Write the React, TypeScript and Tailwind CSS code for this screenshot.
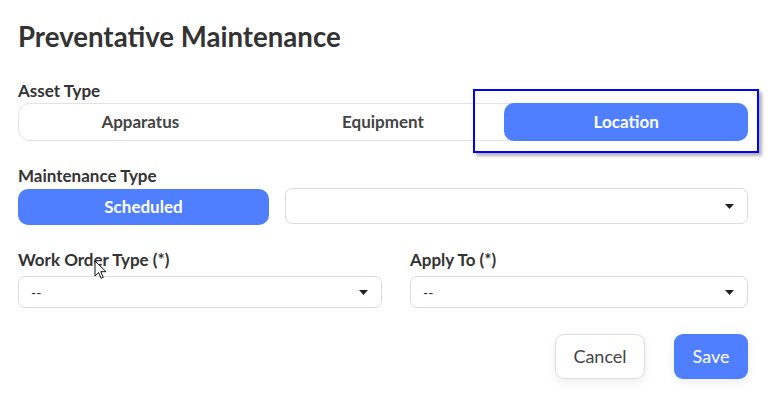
// Preventative maintenance form: asset type segmented control, maintenance type, selects and actions

const font = { fontFamily: 'Lato, "Noto Sans", sans-serif' }

function Caret() {
  return (
    <svg width="9" height="5" viewBox="0 0 9 5" className="shrink-0">
      <path d="M0 0h9L4.5 5z" fill="#222" />
    </svg>
  )
}

function Select({ value, className }: { value?: string; className: string }) {
  return (
    <div
      className={`flex items-center justify-between rounded-[7px] border border-[#dcdcdc] bg-white pl-3 pr-[13px] ${className}`}
    >
      <span className="text-[14px] text-[#333]">{value}</span>
      <Caret />
    </div>
  )
}

function Label({ children, className = '' }: { children: React.ReactNode; className?: string }) {
  return <div className={`text-[17px] leading-5 font-bold text-[#333] ${className}`}>{children}</div>
}

function Cursor() {
  return (
    <svg
      width="13"
      height="20"
      viewBox="0 0 13 20"
      className="absolute left-[94px] top-[260px] pointer-events-none"
    >
      <path
        d="M1 1v15l3.5-3.5 2.6 5.8 2.2-1-2.6-5.6H12z"
        fill="#fff"
        stroke="#111"
        strokeWidth="1"
        strokeLinejoin="round"
      />
    </svg>
  )
}

export default function App() {
  const assetTypes = ['Apparatus', 'Equipment', 'Location']
  const selected = 'Location'

  return (
    <div className="relative w-[768px] h-[405px] bg-white overflow-hidden" style={font}>
      <div className="flex flex-col pl-[18px] pr-[20px] pt-[20px]">
        <h1 className="text-[27.6px] leading-[34px] font-bold text-[#333]">Preventative Maintenance</h1>

        {/* Asset type */}
        <Label className="mt-[27px]">Asset Type</Label>
        <div className="mt-[2px] grid grid-cols-3 h-[38px] rounded-[12px] border border-[#e2e2e2]">
          {assetTypes.map((t) =>
            t === selected ? (
              <div
                key={t}
                className="-my-px -mr-px flex items-center justify-center rounded-[10px] bg-[#4f7fff] text-[17px] font-bold text-white"
              >
                {t}
              </div>
            ) : (
              <div key={t} className="flex items-center justify-center text-[17px] font-bold text-[#444]">
                {t}
              </div>
            )
          )}
        </div>

        {/* Maintenance type */}
        <Label className="mt-[25px]">Maintenance Type</Label>
        <div className="mt-[2px] flex gap-[16px]">
          <div className="mt-px flex h-[36px] w-[251px] items-center justify-center rounded-[10px] bg-[#4f7fff] text-[17px] font-bold text-white">
            Scheduled
          </div>
          <Select className="h-[36px] flex-1" />
        </div>

        {/* Work order / apply to */}
        <div className="mt-[25px] grid grid-cols-[364px_1fr] gap-[28px]">
          <div className="flex flex-col">
            <Label>Work Order Type (*)</Label>
            <Select value="--" className="mt-[6px] h-[32px]" />
          </div>
          <div className="flex flex-col">
            <Label>Apply To (*)</Label>
            <Select value="--" className="mt-[6px] h-[32px]" />
          </div>
        </div>

        {/* Actions */}
        <div className="mt-[26px] flex justify-end gap-[29px]">
          <button className="h-[45px] w-[90px] rounded-[9px] border border-[#dedede] bg-white text-[18px] text-[#444] shadow-[0_3px_8px_rgba(0,0,0,0.08)]">
            Cancel
          </button>
          <button className="h-[45px] w-[74px] rounded-[9px] bg-[#4f7fff] text-[18px] text-white shadow-[0_3px_8px_rgba(0,0,0,0.08)]">
            Save
          </button>
        </div>
      </div>

      {/* focus highlight drawn over the selected segment */}
      <div className="absolute left-[473px] top-[89px] h-[64px] w-[286px] border-2 border-[#0000ff] shadow-[3px_3px_3px_rgba(0,0,0,0.3)] pointer-events-none" />
      <Cursor />
    </div>
  )
}
